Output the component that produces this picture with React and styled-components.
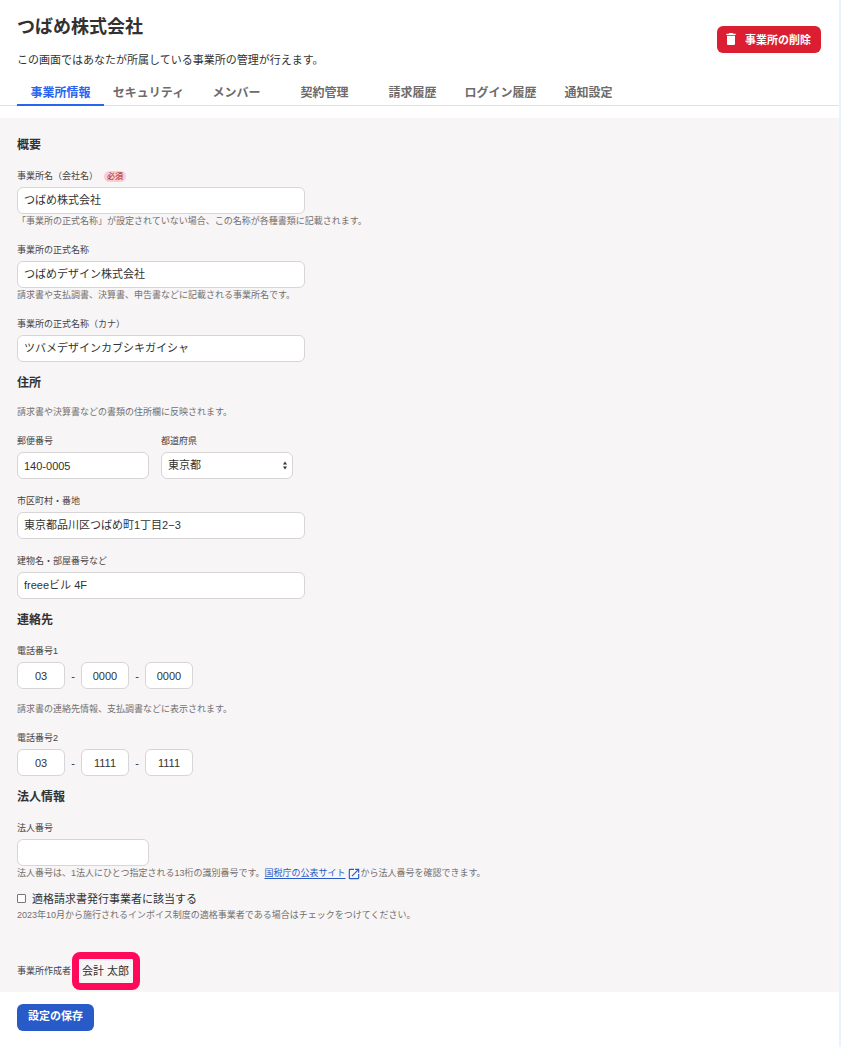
import { useState } from "react";
import styled, { createGlobalStyle } from "styled-components";
import { MdDelete, MdOpenInNew } from "react-icons/md";

const tabs = [
    "事業所情報",
    "セキュリティ",
    "メンバー",
    "契約管理",
    "請求履歴",
    "ログイン履歴",
    "通知設定",
];

function Telefone({ label, name, valores }) {
    return (
        <Fieldset>
            <Legend>{label}</Legend>
            <PhoneRow>
                <PhoneInput aria-label={label + " 市外局番"} name={name + "-1"} defaultValue={valores[0]} />
                <Dash>-</Dash>
                <PhoneInput aria-label={label + " 市内局番"} name={name + "-2"} defaultValue={valores[1]} />
                <Dash>-</Dash>
                <PhoneInput aria-label={label + " 加入者番号"} name={name + "-3"} defaultValue={valores[2]} />
            </PhoneRow>
        </Fieldset>
    );
}

function Campo({ id, label, value, help, required }) {
    return (
        <Field>
            <Label htmlFor={id}>
                {label}
                {required && <Badge>必須</Badge>}
            </Label>
            <TextInput id={id} type="text" defaultValue={value} />
            {help && <Note>{help}</Note>}
        </Field>
    );
}

export default function App() {
    const [tab, setTab] = useState("事業所情報");
    const [invoice, setInvoice] = useState(false);

    return (
        <Page>
            <GlobalStyle />
            <Header>
                <div>
                    <Title>つばめ株式会社</Title>
                    <Lead>この画面ではあなたが所属している事業所の管理が行えます。</Lead>
                </div>
                <DeleteButton type="button">
                    <MdDelete size={16} />
                    事業所の削除
                </DeleteButton>
            </Header>
            <Tabs>
                {tabs.map((t) => (
                    <Tab key={t} type="button" $active={t === tab} onClick={() => setTab(t)}>
                        {t}
                    </Tab>
                ))}
            </Tabs>
            <form onSubmit={(e) => e.preventDefault()}>
                <Main>
                    <Section>
                        <Heading>概要</Heading>
                        <Campo
                            id="name"
                            label="事業所名（会社名）"
                            value="つばめ株式会社"
                            help="「事業所の正式名称」が設定されていない場合、この名称が各種書類に記載されます。"
                            required
                        />
                        <Campo
                            id="official"
                            label="事業所の正式名称"
                            value="つばめデザイン株式会社"
                            help="請求書や支払調書、決算書、申告書などに記載される事業所名です。"
                        />
                        <Campo id="kana" label="事業所の正式名称（カナ）" value="ツバメデザインカブシキガイシャ" />
                    </Section>

                    <Section>
                        <Heading>住所</Heading>
                        <Note>請求書や決算書などの書類の住所欄に反映されます。</Note>
                        <Row>
                            <Field>
                                <Label htmlFor="zip">郵便番号</Label>
                                <Input id="zip" type="text" defaultValue="140-0005" />
                            </Field>
                            <Field>
                                <Label htmlFor="pref">都道府県</Label>
                                <SelectBox>
                                    <Select id="pref" defaultValue="東京都">
                                        <option>東京都</option>
                                        <option>神奈川県</option>
                                        <option>大阪府</option>
                                    </Select>
                                    <Arrows viewBox="0 0 6 9" aria-hidden="true">
                                        <path d="M3 0.5L5 3.5H1zM3 8.5L1 5.5H5z" fill="#323232" />
                                    </Arrows>
                                </SelectBox>
                            </Field>
                        </Row>
                        <Campo id="city" label="市区町村・番地" value="東京都品川区つばめ町1丁目2−3" />
                        <Campo id="building" label="建物名・部屋番号など" value="freeeビル 4F" />
                    </Section>

                    <Section>
                        <Heading>連絡先</Heading>
                        <Telefone label="電話番号1" name="tel1" valores={["03", "0000", "0000"]} />
                        <Note>請求書の連絡先情報、支払調書などに表示されます。</Note>
                        <Telefone label="電話番号2" name="tel2" valores={["03", "1111", "1111"]} />
                    </Section>

                    <Section>
                        <Heading>法人情報</Heading>
                        <Field>
                            <Label htmlFor="corp">法人番号</Label>
                            <Input id="corp" type="text" />
                            <Note>
                                法人番号は、1法人にひとつ指定される13桁の識別番号です。
                                <Link href="#houjin">
                                    <span>国税庁の公表サイト</span>
                                    <MdOpenInNew size={14} />
                                </Link>
                                から法人番号を確認できます。
                            </Note>
                        </Field>
                    </Section>

                    <div>
                        <CheckLabel>
                            <Checkbox type="checkbox" checked={invoice} onChange={(e) => setInvoice(e.target.checked)} />
                            適格請求書発行事業者に該当する
                        </CheckLabel>
                        <Note>2023年10月から施行されるインボイス制度の適格事業者である場合はチェックをつけてください。</Note>
                    </div>

                    <Creator>
                        <Caption>事業所作成者</Caption>
                        <CreatorName>会計 太郎</CreatorName>
                    </Creator>
                </Main>
                <Footer>
                    <SaveButton type="submit">設定の保存</SaveButton>
                </Footer>
            </form>
        </Page>
    );
}


const GlobalStyle = createGlobalStyle`
* {
    box-sizing: border-box;
}

body {
    margin: 0;
    background: #FFFFFF;
    color: #323232;
    font-family: "Liberation Sans", "Noto Sans CJK JP", sans-serif;
    font-size: 11px;
    line-height: 18px;
}

h1, h2, p {
    margin: 0;
}

button, input, select {
    font-family: inherit;
    font-size: 11px;
    color: inherit;
}
`;

const Page = styled.div`
min-height: 100vh;
border-right: 2px solid #E9F2FF;
`;

const Header = styled.header`
display: flex;
justify-content: space-between;
align-items: flex-start;
padding: 13px 18px 0 17px;
`;

const Title = styled.h1`
font-size: 18px;
line-height: 28px;
font-weight: 700;
`;

const Lead = styled.p`
margin-top: 10px;
`;

const Button = styled.button`
display: flex;
justify-content: center;
align-items: center;
height: 27px;
border: none;
border-radius: 6px;
font-weight: 700;
color: #FFFFFF;
cursor: pointer;
`;

const DeleteButton = styled(Button)`
gap: 6px;
margin-top: 13px;
padding: 0 10px 2px 6px;
background: #DC1E32;
`;

const SaveButton = styled(Button)`
padding: 0 11px 4px;
background: #285AC8;
`;

const Tabs = styled.nav`
display: flex;
gap: 1px;
margin-top: 11px;
padding-left: 17px;
box-shadow: inset 0 -1px 0 #E1E1E1;
`;

const Tab = styled.button`
min-width: 87px;
height: 26px;
padding: 0 0 2px;
border: none;
border-bottom: 2px solid ${(props) => (props.$active ? "#2864F0" : "transparent")};
background: none;
font-size: 12px;
font-weight: 700;
color: ${(props) => (props.$active ? "#2864F0" : "#6E6B6B")};
cursor: pointer;
`;

const Main = styled.div`
display: flex;
flex-direction: column;
gap: 12px;
margin-top: 12px;
padding: 18px 17px 2px;
background: #F7F5F6;
`;

const Section = styled.section`
display: flex;
flex-direction: column;
gap: 13px;

&:last-of-type {
    margin-bottom: -3px;
}
`;

const Heading = styled.h2`
font-size: 12px;
line-height: 18px;
font-weight: 700;
`;

const Field = styled.div`
display: flex;
flex-direction: column;
align-items: flex-start;
`;

const Row = styled.div`
display: flex;
gap: 12px;
`;

const Label = styled.label`
display: flex;
align-items: center;
gap: 6px;
margin-bottom: 2px;
font-size: 9px;
line-height: 18px;
color: #464343;
`;

const Badge = styled.span`
height: 11px;
padding: 0 3px;
border-radius: 6px;
background: #FACDD2;
font-size: 8px;
line-height: 11px;
color: #A51428;
`;

const Input = styled.input`
width: 132px;
max-width: 100%;
height: 27px;
padding: 0 6px;
border: 1px solid #D7D5D5;
border-radius: 6px;
background: #FFFFFF;
`;

const TextInput = styled(Input)`
width: 288px;
padding-bottom: 3px;
`;

const Note = styled.p`
font-size: 9px;
line-height: 14px;
color: #737070;
`;

const SelectBox = styled.div`
position: relative;
width: 132px;
`;

const Select = styled.select`
display: block;
width: 100%;
height: 27px;
padding: 0 6px 2px;
border: 1px solid #D7D5D5;
border-radius: 6px;
background: #FFFFFF;
appearance: none;
`;

const Arrows = styled.svg`
position: absolute;
top: 9px;
right: 5px;
width: 6px;
height: 9px;
pointer-events: none;
`;

const Fieldset = styled.fieldset`
margin: 0;
padding: 0;
border: none;
`;

const Legend = styled.legend`
padding: 0 0 2px;
font-size: 9px;
line-height: 18px;
color: #464343;
`;

const PhoneRow = styled.div`
display: flex;
align-items: center;
`;

const PhoneInput = styled(Input)`
width: 48px;
text-align: center;
`;

const Dash = styled.span`
width: 16px;
text-align: center;
`;

const Link = styled.a`
color: #285AC8;
text-decoration: none;

span {
    text-decoration: underline;
    text-underline-offset: 2px;
}

svg {
    margin-left: 1px;
    vertical-align: middle;
}
`;

const CheckLabel = styled.label`
display: flex;
align-items: center;
gap: 6px;
`;

const Checkbox = styled.input`
appearance: none;
width: 9px;
height: 9px;
margin: 0;
border: 1px solid #767676;
border-radius: 1px;
background: #FFFFFF;

&:checked {
    background: #285AC8;
}
`;

const Creator = styled.div`
display: flex;
align-items: center;
gap: 1px;
margin-top: 18px;
`;

const Caption = styled.span`
font-size: 9px;
color: #464343;
`;

const CreatorName = styled.span`
min-width: 68px;
padding: 3px;
border: 7px solid #FF0A5A;
border-radius: 8px;
`;

const Footer = styled.footer`
padding: 12px 17px 16px;
`;
